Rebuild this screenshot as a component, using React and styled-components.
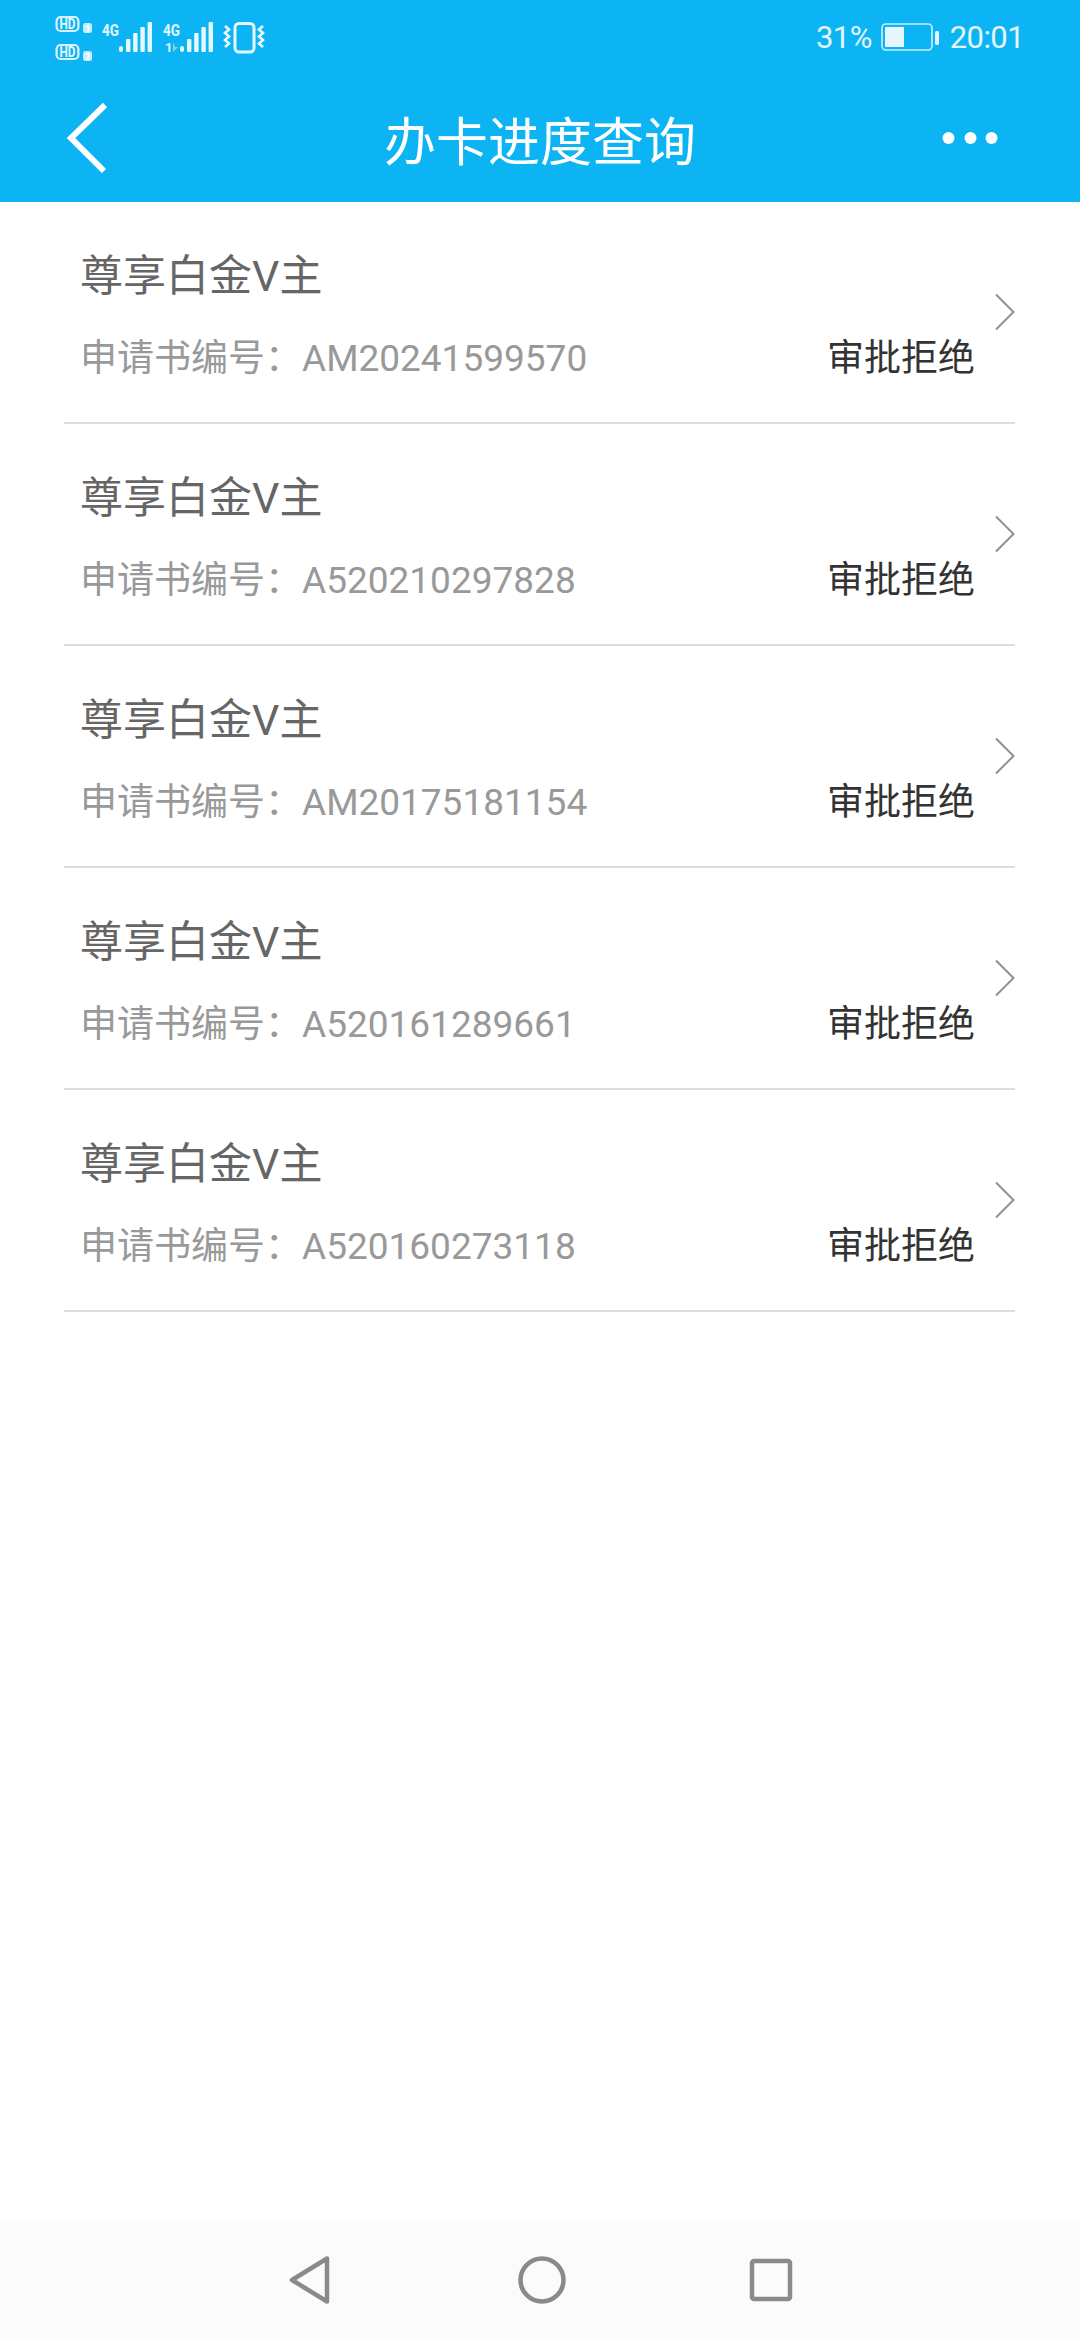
import React from 'react'
import styled, { createGlobalStyle } from 'styled-components'

const applications = ['AM20241599570', 'A520210297828', 'AM20175181154', 'A520161289661', 'A520160273118']

const GlobalStyle = createGlobalStyle`
  html, body {
    margin: 0;
    padding: 0;
    background: #fff;
  }
  body {
    font-family: Roboto, "Noto Sans CJK SC", sans-serif;
  }
`

const App = () => (
  <Page>
    <GlobalStyle />
    <Header>
      <StatusBar>
        <StatusIcons />
        <StatusRight>
          <StatusText>31%</StatusText>
          <Battery />
          <StatusText>20:01</StatusText>
        </StatusRight>
      </StatusBar>
      <Toolbar>
        <BackIcon />
        <Title>办卡进度查询</Title>
        <MoreIcon />
      </Toolbar>
    </Header>
    <List>
      {applications.map((number) => (
        <Row key={number}>
          <Info>
            <CardName>尊享白金V主</CardName>
            <Details>
              <Number>申请书编号：{number}</Number>
              <Status>审批拒绝</Status>
            </Details>
          </Info>
          <Chevron />
        </Row>
      ))}
    </List>
    <NavBar>
      <svg width="44" height="52" viewBox="0 0 44 52">
        <path d="M39 4.5 V47.5 L4 26 Z" fill="none" stroke="#8a8a8a" strokeWidth="4.5" strokeLinejoin="round" />
      </svg>
      <svg width="48" height="48" viewBox="0 0 48 48">
        <circle cx="24" cy="24" r="21.5" fill="none" stroke="#8a8a8a" strokeWidth="4.5" />
      </svg>
      <SquareSvg width="44" height="44" viewBox="0 0 44 44">
        <rect x="3" y="3" width="38" height="38" rx="2" fill="none" stroke="#8a8a8a" strokeWidth="4.5" />
      </SquareSvg>
    </NavBar>
  </Page>
)

const SignalBars = ({ x }) => (
  <g fill="#e6f8ff">
    <rect x={x} y="30" width="4" height="6" rx="2" />
    <rect x={x + 7} y="23" width="4.4" height="13" rx="1" />
    <rect x={x + 14.2} y="17" width="4.4" height="19" rx="1" />
    <rect x={x + 21.4} y="11" width="4.4" height="25" rx="1" />
    <rect x={x + 28.6} y="6" width="4.4" height="30" rx="1" />
  </g>
)

const StatusIcons = () => (
  <svg width="215" height="48" viewBox="0 0 215 48">
    <g fill="none" stroke="#d8f3ff" strokeWidth="2.2">
      <rect x="1.6" y="1" width="21.8" height="14" rx="4" />
      <rect x="1.6" y="29" width="21.8" height="14" rx="4" />
    </g>
    <g fill="#e6f8ff" stroke="none" fontFamily="Roboto, sans-serif" fontWeight="700">
      <text x="4.5" y="13" fontSize="14" textLength="16" lengthAdjust="spacingAndGlyphs">HD</text>
      <text x="4.5" y="41" fontSize="14" textLength="16" lengthAdjust="spacingAndGlyphs">HD</text>
      <text x="47" y="19.5" fontSize="16.5" textLength="17" lengthAdjust="spacingAndGlyphs">4G</text>
      <text x="108" y="19.5" fontSize="16.5" textLength="17" lengthAdjust="spacingAndGlyphs">4G</text>
      <text x="110" y="36" fontSize="13">1</text>
    </g>
    <g fontFamily="Roboto, sans-serif" fontWeight="700" fontSize="9" textAnchor="middle">
      <rect x="28" y="7" width="9" height="10" rx="2.5" fill="#c4ecfb" />
      <rect x="28" y="35" width="9" height="10" rx="2.5" fill="#c4ecfb" />
      <text x="32.5" y="15.5" fill="#fff">1</text>
      <text x="32.5" y="43.5" fill="#fff">2</text>
    </g>
    <path d="M118 26 v10 l5 -5 h-3 z" fill="#7fd3f6" />
    <SignalBars x={64} />
    <SignalBars x={125} />
    <g fill="none" stroke="#e6f8ff">
      <rect x="180" y="7.5" width="19" height="28.5" rx="4" strokeWidth="3" />
      <path d="M170 10 l4 3.5 l-4 3.5 l4 3.5 l-4 3.5 l4 3.5 l-4 3.5" strokeWidth="2.6" />
      <path d="M208 10 l-4 3.5 l4 3.5 l-4 3.5 l4 3.5 l-4 3.5 l4 3.5" strokeWidth="2.6" />
    </g>
  </svg>
)

const Battery = () => (
  <svg width="60" height="30" viewBox="0 0 60 30">
    <rect x="1" y="2" width="50" height="26" rx="4" fill="none" stroke="#c9efff" strokeWidth="1.6" />
    <rect x="4" y="5" width="19" height="20" fill="#e6f7ff" />
    <rect x="54" y="9" width="4" height="14" rx="1.5" fill="#e3f6ff" />
  </svg>
)

const BackIcon = () => (
  <svg width="44" height="72" viewBox="0 0 44 72">
    <path d="M40 3 L6 36 L39 69" fill="none" stroke="#fff" strokeWidth="6" />
  </svg>
)

const MoreIcon = () => (
  <MoreSvg width="56" height="14" viewBox="0 0 56 14">
    <circle cx="6.5" cy="7" r="6" fill="#fff" />
    <circle cx="28.5" cy="7" r="6" fill="#fff" />
    <circle cx="49.5" cy="7" r="6" fill="#fff" />
  </MoreSvg>
)

const Chevron = () => (
  <ChevronSvg width="20" height="38" viewBox="0 0 20 38">
    <path d="M1 1.5 L18.5 19 L1 36.5" fill="none" stroke="#8f8f8f" strokeWidth="2" />
  </ChevronSvg>
)

const Page = styled.div`
  display: flex;
  flex-direction: column;
  width: 1080px;
  height: 2340px;
  overflow: hidden;
`

const Header = styled.header`
  height: 202px;
  background-color: #0db4f3;
`

const StatusBar = styled.div`
  display: flex;
  justify-content: space-between;
  align-items: flex-start;
  height: 74px;
  padding: 16px 56px 0 55px;
  box-sizing: border-box;
`

const StatusRight = styled.div`
  display: flex;
  align-items: center;
  gap: 9px;
  height: 46px;
  margin-top: -2px;
`

const StatusText = styled.span`
  font-size: 31px;
  letter-spacing: -0.6px;
  color: #e3f6ff;
`

const Toolbar = styled.div`
  display: grid;
  grid-template-columns: 1fr auto 1fr;
  align-items: center;
  height: 128px;
  padding: 0 65px;
`

const Title = styled.h1`
  margin: 0;
  font-size: 52px;
  font-weight: 400;
  color: #fff;
`

const MoreSvg = styled.svg`
  justify-self: end;
  margin-right: 17px;
`

const List = styled.main`
  flex: 1;
  padding: 0 65px 0 64px;
`

const Row = styled.section`
  display: flex;
  align-items: center;
  height: 222px;
  padding-left: 16px;
  box-sizing: border-box;
  border-bottom: 2px solid #dcdcdc;
`

const Info = styled.div`
  flex: 1;
  display: flex;
  flex-direction: column;
  gap: 29px;
  padding-top: 6px;
`

const CardName = styled.div`
  font-size: 43px;
  line-height: 58px;
  color: #666;
`

const Details = styled.div`
  display: flex;
  justify-content: space-between;
  align-items: center;
`

const Number = styled.span`
  font-size: 37px;
  line-height: 50px;
  color: #999;
`

const Status = styled.span`
  font-size: 37px;
  line-height: 50px;
  color: #333;
`

const ChevronSvg = styled.svg`
  flex: none;
  margin-left: 20px;
`

const NavBar = styled.nav`
  display: flex;
  justify-content: center;
  align-items: center;
  gap: 186px;
  height: 120px;
  background-color: #fbfbfb;
`

const SquareSvg = styled.svg`
  margin-left: -3px;
`

export default App
